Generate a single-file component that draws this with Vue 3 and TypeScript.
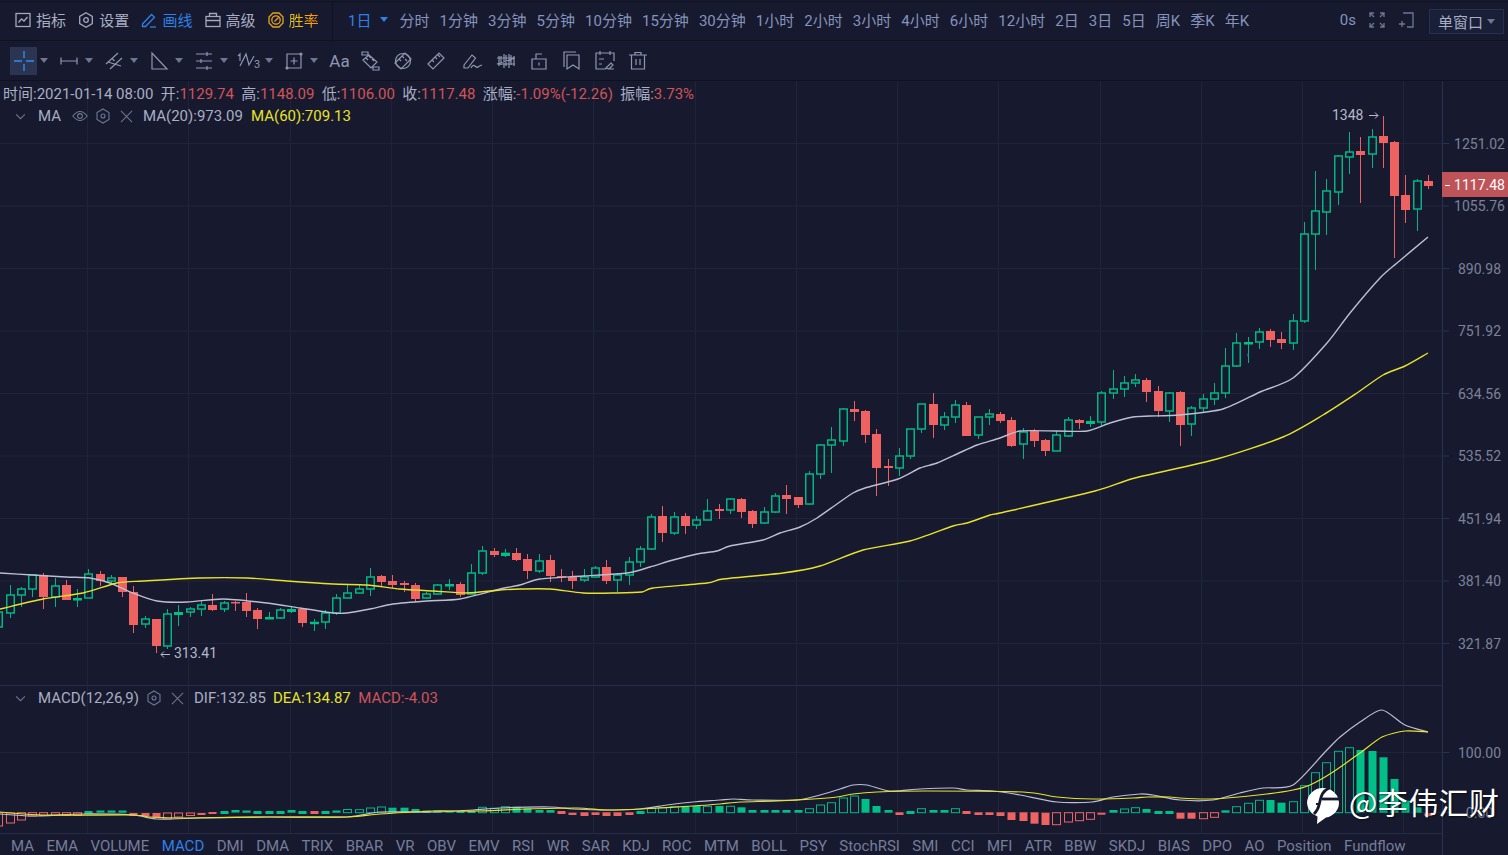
<script setup lang="ts">
type Candle = [string, number, number, number, number]
const raw: Candle[] = [
['g',612,627,608,631],['g',595,613,585,618],['g',589,595,587,607],['g',575,589,575,597],['r',575,597,573,609],['g',586,597,578,607],['r',585,600,580,600],['g',598,599,589,607],
['g',574,598,569,598],['r',574,581,571,586],['g',578,581,575,583],['r',577,592,577,597],['r',592,625,586,633],['g',619,624,616,628],['r',619,646,619,653],['g',614,646,609,649],
['g',612,614,605,626],['g',609,612,607,617],['g',605,609,601,616],['r',605,610,594,611],['g',603,609,601,612],['r',602,603,601,611],['r',602,611,593,617],['r',610,619,608,629],
['g',617,618,612,619],['g',610,618,608,619],['g',609,611,607,613],['r',609,623,608,627],['g',621.7,623,619,631],['g',613,622,610,629],['g',598,613,594,615],['g',593,598,585,598],
['g',589,593,585,593],['g',577,589,568,596],['r',576,582,575,587],['r',581,585,575,588],['r',583,585,581,592],['r',585,599,583,602],['g',594,598,592,599],['g',585,594,584,595],
['g',584,585,579,590],['r',584,595,582,597],['g',573,594,564,594],['g',551,573,546,575],['r',551,555,548,557],['g',552.7,555,549,557],['r',553,560,548,561],['r',559,571,554,579],
['g',561,571,554,573],['r',560,576,555,582],['r',576,577,569,582],['r',577,581,571,589],['g',577,580,569,582],['g',568,577,566,578],['r',567,581,560,584],['g',575,580,573,592],
['g',562,575,557,585],['g',549,562,546,567],['g',517,549,514,550],['r',516,533,506,542],['g',517,533,512,535],['r',516,526,513,534],['g',520,525,516,529],['g',511,520,499,520],
['r',509,511,504,519],['g',499,510,498,514],['r',499,512,498,518],['r',511,524,510,528],['g',512,523,507,524],['g',496,512,493,513],['r',495,499,485,514],['r',497,505,497,508],
['g',474,504,471,505],['g',445,474,444,479],['g',440,445,427,473],['g',409,441,408,446],['r',409,412,401,421],['r',411,435,410,443],['r',434,468,429,496],['r',466,468,459,486],
['g',456,468,448,476],['g',429,456,429,459],['g',404,429,404,433],['r',404,425,393,438],['g',417,425,412,430],['g',405,417,400,423],['r',405,436,402,436],['g',417,435,417,439],
['g',414,417,409,425],['r',414,421,412,423],['r',420,446,417,447],['g',432,444,428,459],['r',431,441,429,447],['r',440,451,439,456],['g',435,451,431,451],['g',420,436,417,437],
['r',420,423,419,429],['g',421,423,416,427],['g',393,422,391,426],['g',389,393,370,399],['g',383,389,376,397],['g',380,383,374,387],['r',380,392,378,402],['r',391,411,386,417],
['g',393,411,392,422],['r',392,425,391,446],['g',408,424,406,436],['g',399,408,394,412],['g',393,399,383,405],['g',366,393,348,398],['g',343,366,333,367],['g',342,343,337,363],
['g',332,342,328,349],['r',331,340,329,347],['r',339,343,332,349],['g',321,343,314,350],['g',234,321,222,323],['g',211,234,171,270],['g',191,212,179,235],['g',156,192,155,205],
['g',152,157,132,174],['r',151,155,137,203],['g',137,154,129,168],['r',136,143,116,168],['r',142,196,141,258],['r',195,210,175,223],['g',181,209,179,231],['r',181,186,175,189],
]
const xOf = (i: number) => Math.round(-1.6 + 11.255 * i) + 0.5
const candles = raw.map((c, i) => {
  const [t, top, bot, hi, lo] = c
  const x = xOf(i)
  const thin = bot - top < 3
  return { key: i, green: t === 'g', x, top, bot, hi, lo, thin, h: Math.max(bot - top, 1.5) }
})

// Catmull-Rom smoothing of the sampled curves, so that they bend like the reference's lines
const smooth = (a: number[][]) => {
  let d = `M${a[0][0]} ${a[0][1]}`
  for (let i = 0; i < a.length - 1; i++) {
    const p0 = a[Math.max(i - 1, 0)]
    const p1 = a[i]
    const p2 = a[i + 1]
    const p3 = a[Math.min(i + 2, a.length - 1)]
    const c1x = p1[0] + (p2[0] - p0[0]) / 8
    const c1y = p1[1] + (p2[1] - p0[1]) / 8
    const c2x = p2[0] - (p3[0] - p1[0]) / 8
    const c2y = p2[1] - (p3[1] - p1[1]) / 8
    d += `C${c1x.toFixed(1)} ${c1y.toFixed(1)} ${c2x.toFixed(1)} ${c2y.toFixed(1)} ${p2[0]} ${p2[1]}`
  }
  return d
}
const ma20 = smooth([[0,573],[33,575],[66,577],[90,578],[110,583],[133,593],[157,601],[187,602],[223,599],[267,603],[300,608],[333,613],[347,613],[370,609],[393,604],[427,601],[460,599],[500,589],[520,585],[540,579],[583,576],[627,573],[650,567],[673,560],[697,554],[717,551],[730,546],[763,540],[780,533],[800,527],[817,518],[837,504],[853,493],[865,488],[898,479],[920,468],[937,463],[957,454],[977,445],[1000,438],[1020,431],[1057,431],[1087,431],[1110,423],[1133,417],[1150,416],[1180,415],[1223,409],[1260,392],[1293,378],[1327,343],[1350,313],[1380,278],[1397,263],[1428,237]])
const ma60 = smooth([[0,609],[43,599],[83,593],[117,583],[143,581],[200,578],[247,578],[287,581],[333,584],[367,585],[400,589],[433,591],[467,593],[500,590],[520,589],[550,589],[583,593],[617,593],[642,592],[653,588],[707,583],[723,579],[783,573],[820,566],[863,550],[910,541],[953,526],[967,523],[990,515],[1000,513],[1095,491],[1135,478],[1217,459],[1283,437],[1323,415],[1357,393],[1383,375],[1405,366],[1428,353]])
const dif = smooth([[0,814],[33,816],[83,814],[133,815],[157,819],[200,818],[267,817],[347,817],[380,812],[433,812],[473,810],[500,808],[550,807],[573,809],[607,810],[640,809],[667,805],[693,802],[720,800],[733,799],[753,800],[797,800],[820,795],[840,789],[853,785],[867,785],[890,791],[920,789],[953,788],[967,790],[993,791],[1020,795],[1057,802],[1092,802],[1113,797],[1140,794],[1153,795],[1180,800],[1213,800],[1240,793],[1263,788],[1293,785],[1325,752],[1340,737],[1360,722],[1382,710],[1405,725],[1428,732]])
const dea = smooth([[0,812],[43,815],[133,815],[150,817],[187,818],[267,817],[347,817],[380,814],[433,811],[477,811],[527,809],[577,808],[607,810],[640,809],[693,806],[720,804],[740,802],[777,801],[813,799],[837,797],[853,794],[877,792],[927,791],[1023,792],[1057,797],[1093,799],[1133,798],[1147,797],[1170,797],[1180,798],[1207,799],[1227,798],[1267,794],[1293,790],[1310,785],[1333,772],[1360,753],[1382,737],[1405,731],[1428,732]])

type Bar = [string, number, number]
const B = 812.7
const hist: Bar[] = [
['r',B,826],['r',813,823],['r',B,820],['r',B,816],['r',B,815.5],['r',B,815.5],['r',B,815.5],['r',B,815.5],
['G',811,814],['G',810.5,B],['G',810.5,B],['G',810.5,B],['R',813,816],['R',813,816],['R',813,818],['r',813,819],
['r',813,817],['r',813,815.5],['R',813,815],['R',812,814],['G',811,814],['G',810,812.5],['G',810.5,B],['G',811,814],
['G',811,814],['G',811,814],['G',810,B],['G',811,814],['R',811,814],['G',811,814],['G',810.5,B],['g',809.5,B],
['g',809.7,B],['g',808,B],['g',807,B],['G',807.7,B],['G',807.7,B],['G',809,B],['G',810.5,B],['G',810.5,B],
['G',811,B],['G',811,813],['G',811,813],['g',807.3,B],['g',808.3,B],['g',806.7,B],['G',806.7,B],['G',808.3,B],
['G',810,B],['G',810,B],['R',811,814],['R',B,815],['R',812.3,816],['R',812.3,815],['R',812.3,816],['R',812.3,816],
['R',812.3,815],['G',811,814],['g',808.3,B],['g',807.7,B],['g',806.7,B],['G',807,B],['G',806,B],['g',806.3,B],
['G',806,B],['g',806.3,B],['G',807.3,B],['G',810,B],['G',810,B],['G',810,B],['G',810,B],['G',810,B],
['g',808.7,B],['g',805,B],['g',802.7,B],['g',798,B],['g',796,B],['G',799,B],['G',806,B],['G',810,B],
['R',812.3,815],['G',811,814],['g',808.7,B],['G',810,B],['G',810,B],['g',808.7,B],['R',811,814],['R',812.3,815],
['R',812.3,815],['R',812.3,816],['R',812.3,820],['R',812.3,821],['R',812.3,823.7],['R',B,825],['r',B,824.7],['r',B,822],
['r',B,820.7],['r',B,819.3],['R',B,814.7],['G',810,B],['g',809,B],['g',807.7,B],['G',809,B],['G',811,814],
['G',811,814],['R',B,818.7],['R',B,818.7],['r',B,818.7],['r',B,817.3],['G',810.3,B],['g',806.7,B],['g',803.3,B],
['g',800.3,B],['G',800,B],['G',802.7,B],['g',801.7,B],['g',785.7,B],['g',772.7,B],['g',762.7,B],['g',751.3,B],
['g',747.7,B],['G',750,B],['G',751,B],['G',757.3,B],['G',779,B],['G',800.7,B],['G',807.3,B],['R',813.3,816],
]
const bars = hist.map((b, i) => ({
  key: i,
  x: xOf(i),
  cls: { g: 'bar-g-h', G: 'bar-g', r: 'bar-r-h', R: 'bar-r' }[b[0]] as string,
  y: b[1],
  h: b[2] - b[1],
}))

const vGrid = Array.from({ length: 14 }, (_, i) => 87.5 + Math.round(101.25 * i))
const hLabels = [
  { y: 143.5, t: '1251.02' }, { y: 206, t: '1055.76' }, { y: 268.5, t: '890.98' }, { y: 331, t: '751.92' },
  { y: 393.5, t: '634.56' }, { y: 456, t: '535.52' }, { y: 518.5, t: '451.94' }, { y: 581, t: '381.40' }, { y: 643.5, t: '321.87' },
  { y: 752.5, t: '100.00' }, { y: 812.5, t: '0.00' },
]
const periods = ['分时','1分钟','3分钟','5分钟','10分钟','15分钟','30分钟','1小时','2小时','3小时','4小时','6小时','12小时','2日','3日','5日','周K','季K','年K']
const tabs = ['MA','EMA','VOLUME','MACD','DMI','DMA','TRIX','BRAR','VR','OBV','EMV','RSI','WR','SAR','KDJ','ROC','MTM','BOLL','PSY','StochRSI','SMI','CCI','MFI','ATR','BBW','SKDJ','BIAS','DPO','AO','Position','Fundflow']
</script>

<template>
  <div class="app">
    <header class="topbar">
      <div class="menu">
        <span class="menu-item">
          <svg class="ic16" viewBox="0 0 16 16"><rect x="1" y="1.5" width="14" height="13" /><path d="M3.5 10.5 6.5 7l2.5 2 3.5-4" /></svg>指标
        </span>
        <span class="menu-item">
          <svg class="ic16" viewBox="0 0 16 16"><path d="M8 .8 14.3 4.4v7.2L8 15.2 1.7 11.6V4.4Z" /><circle cx="8" cy="8" r="2.3" /></svg>设置
        </span>
        <span class="menu-item active">
          <svg class="ic16 blue" viewBox="0 0 16 16"><path d="M1.5 12 10.5 2.5l3 2.8-9 9.2H1.5Z" /><path d="M9 15h6" /></svg>画线
        </span>
        <span class="menu-item">
          <svg class="ic16" viewBox="0 0 16 16"><rect x="1" y="4.5" width="14" height="10" /><path d="M1 8.5h14M4.5 4.5V1.5h7v3" /></svg>高级
        </span>
        <span class="menu-item">
          <svg class="ic16 orange" viewBox="0 0 16 16"><path d="M5 1h6l4 4v6l-4 4H5l-4-4V5Z" /><circle cx="8" cy="8" r="4.200" /><path d="M6.5 9.5 10.5 5.5" /></svg><em class="rate">胜率</em>
        </span>
      </div>
      <div class="periods">
        <span class="cur-period">1日<i class="caret blue-caret"></i></span>
        <span v-for="p in periods" :key="p" class="period">{{ p }}</span>
      </div>
      <div class="top-right">
        <span class="secs">0s</span>
        <svg class="ic16 dim" viewBox="0 0 16 16"><path d="M1 5V1h4M11 1h4v4M15 11v4h-4M5 15H1v-4M1.5 1.5 5 5M14.5 1.5 11 5M14.5 14.5 11 11M1.5 14.5 5 11" /></svg>
        <svg class="ic16 dim" viewBox="0 0 16 16"><path d="M5 1h10v14H9M1 12h6M4 9v6" /></svg>
        <div class="win-select">单窗口<i class="caret gray-caret"></i></div>
      </div>
    </header>

    <nav class="toolbar">
      <div class="tool-group">
        <span class="tool on">
          <svg class="ic20" viewBox="0 0 20 20"><path class="cross" d="M0 10H8M12 10H20M10 0V7M10 13V20" /></svg>
        </span><i class="caret gray-caret"></i>
      </div>
      <div class="tool-group">
        <span class="tool"><svg class="ic20" viewBox="0 0 20 20"><path d="M2 6.5v7M18 6.5v7M2 10h16" /></svg></span><i class="caret gray-caret"></i>
      </div>
      <div class="tool-group">
        <span class="tool"><svg class="ic20" viewBox="0 0 20 20"><path d="M2 13 14 2M6 18 18 7M4 11 17 15M8 7.5l2.5 2.5" /></svg></span><i class="caret gray-caret"></i>
      </div>
      <div class="tool-group">
        <span class="tool"><svg class="ic20" viewBox="0 0 20 20"><path d="M3 2V18H18Z" /></svg></span><i class="caret gray-caret"></i>
      </div>
      <div class="tool-group">
        <span class="tool"><svg class="ic20" viewBox="0 0 20 20"><path d="M2 3H18M2 10H18M2 17H18M13 1V5M7 8V12M13 15V19" /></svg></span><i class="caret gray-caret"></i>
      </div>
      <div class="tool-group">
        <span class="tool wave">
          <svg class="ic24" viewBox="0 0 24 20"><path d="M1 5l2-2V10M3 15 9 3 12 14 17 5" /><text x="17" y="17" class="ic-text">3</text></svg>
        </span><i class="caret gray-caret"></i>
      </div>
      <div class="tool-group">
        <span class="tool"><svg class="ic20" viewBox="0 0 20 20"><path d="M3 3H17V17H3ZM10 6.5v7M6.5 10h7" /><circle class="dot" cx="17" cy="3" r="1.6" /><circle class="dot" cx="3" cy="17" r="1.6" /></svg></span><i class="caret gray-caret"></i>
      </div>
      <span class="aa">Aa</span>
      <div class="singles">
        <svg class="ic20" viewBox="0 0 20 20"><path d="M2 1H8V4H2ZM13 16H19V19H13ZM3 9 9 4 17 11 11 17ZM6 7l2 2M9 5l2 2M12 8l2 2" /></svg>
        <svg class="ic20" viewBox="0 0 20 20"><circle cx="10" cy="10" r="7.500" /><path d="M2 12 12 2 18 8 8 18ZM6 8l2 2M9 5l2 2M12 8l2 2" /></svg>
        <svg class="ic20" viewBox="0 0 20 20"><path d="M2 13 13 2 18 7 7 18ZM6 9l2 2M9 6l2 2M12 4l2 2" /></svg>
        <svg class="ic20 pen" viewBox="0 0 20 20"><path d="M1 14 9 4l3.500 3L5 17H1ZM8 17q2-4 4-2t3 1 4-2" /></svg>
        <svg class="ic20" viewBox="0 0 20 20"><path d="M1 7H19M1 13H19M3 5v10M8 3v14M13 3v14M18 5v10M1 13 19 7M5 5v9M10 4v11M15 4v10" /></svg>
        <svg class="ic20" viewBox="0 0 20 20"><path d="M3 8H17V18H3ZM7 8V3H13M10 11.500v3" /></svg>
        <svg class="ic20" viewBox="0 0 20 20"><path d="M2 16V1H14M5 4H17V18L11 14 5 18Z" /></svg>
        <svg class="ic20" viewBox="0 0 20 20"><path d="M11 18H1V2H19V10M5 0V4M15 0V4M4 8H9M4 13H7M11 17 16 12l2 2-4 4ZM15 18h4" /></svg>
        <svg class="ic20" viewBox="0 0 20 20"><path d="M1 4H19M7 4V1.500H13V4M3.500 4V18H16.500V4M8 8V14M12 8V14" /></svg>
      </div>
    </nav>

    <section class="chart">
      <svg class="plot" viewBox="0 81 1508 752" width="1508" height="752">
        <g class="grid">
          <line v-for="x in vGrid" :key="x" :x1="x" :x2="x" y1="81" y2="833" />
          <line v-for="l in hLabels" :key="l.t" x1="0" x2="1442" :y1="l.y" :y2="l.y" />
        </g>
        <line class="sep" x1="0" x2="1442" y1="685.5" y2="685.5" />

        <g v-for="c in candles" :key="c.key">
          <template v-if="c.green">
            <line class="wick-g" :x1="c.x" :x2="c.x" :y1="c.hi" :y2="c.top" />
            <line class="wick-g" :x1="c.x" :x2="c.x" :y1="c.bot" :y2="c.lo" />
            <rect v-if="c.thin" class="solid-g" :x="c.x - 4.5" :y="c.top" width="9" :height="c.h + 1" />
            <rect v-else class="hollow-g" :x="c.x - 3.75" :y="c.top" width="7.5" :height="c.h" />
          </template>
          <template v-else>
            <line class="wick-r" :x1="c.x" :x2="c.x" :y1="c.hi" :y2="c.lo" />
            <rect class="solid-r" :x="c.x - 4.5" :y="c.top" width="9" :height="c.h" />
          </template>
        </g>
        <line class="blue-tick" x1="1248" x2="1248" y1="353.500" y2="356.500" />
        <path class="line-white" :d="ma20" />
        <path class="line-yellow" :d="ma60" />

        <text class="note" x="1332" y="120">1348</text>
        <path class="note-arrow" d="M1369 115.500H1378M1375 112.500l3 3-3 3" />
        <text class="note" x="174" y="658">313.41</text>
        <path class="note-arrow" d="M161 654.500H170M164 651.500l-3 3 3 3" />

        <rect v-for="b in bars" :key="b.key" :class="b.cls" :x="b.x - 4" :y="b.y" width="8" :height="b.h" />
        <path class="line-white thin" :d="dif" />
        <path class="line-yellow thin" :d="dea" />

        <line class="axis" x1="1442.5" x2="1442.5" y1="81" y2="833" />
        <g v-for="l in hLabels" :key="'a' + l.t">
          <line class="axis" x1="1443" x2="1449" :y1="l.y" :y2="l.y" />
          <text class="axis-text" x="1479.500" :y="l.y + 5">{{ l.t }}</text>
        </g>
        <rect class="price-tag" x="1442" y="172" width="66" height="25" />
        <line class="price-dash" x1="1445" x2="1450" y1="185.500" y2="185.500" />
        <text class="price-text" x="1479.500" y="190">1117.48</text>
      </svg>

      <div class="legend main-legend">
        <div class="info">
          <span><b>时间:</b>2021-01-14 08:00</span>
          <span><b>开:</b><u>1129.74</u></span>
          <span><b>高:</b><u>1148.09</u></span>
          <span><b>低:</b><u>1106.00</u></span>
          <span><b>收:</b><u>1117.48</u></span>
          <span><b>涨幅:</b><u>-1.09%(-12.26)</u></span>
          <span><b>振幅:</b><u>3.73%</u></span>
        </div>
        <div class="ind">
          <svg class="chev" viewBox="0 0 12 8"><path d="M1 1.500 6 6.500 11 1.500" /></svg>
          <span class="ind-name ma-name">MA</span>
          <svg class="lg eye" viewBox="0 0 16 12"><path d="M.8 6Q8-3 15.200 6 8 15 .8 6Z" /><circle cx="8" cy="6" r="2.400" /></svg>
          <svg class="lg hex" viewBox="0 0 14 16"><path d="M7 1 13 4.500V11.500L7 15 1 11.500V4.500Z" /><circle cx="7" cy="8" r="2" /></svg>
          <svg class="lg x" viewBox="0 0 14 14"><path d="M1 1 13 13M13 1 1 13" /></svg>
          <span class="v1">MA(20):973.09</span>
          <span class="v2">MA(60):709.13</span>
        </div>
      </div>

      <div class="legend macd-legend">
        <div class="ind">
          <svg class="chev" viewBox="0 0 12 8"><path d="M1 1.500 6 6.500 11 1.500" /></svg>
          <span class="ind-name">MACD(12,26,9)</span>
          <svg class="lg hex macd-hex" viewBox="0 0 14 16"><path d="M7 1 13 4.500V11.500L7 15 1 11.500V4.500Z" /><circle cx="7" cy="8" r="2" /></svg>
          <svg class="lg x" viewBox="0 0 14 14"><path d="M1 1 13 13M13 1 1 13" /></svg>
          <span class="v1 dif">DIF:132.85</span>
          <span class="v2 dea">DEA:134.87</span>
          <span class="v3">MACD:-4.03</span>
        </div>
      </div>

      <div class="watermark">
        <svg class="wm-logo" viewBox="0 0 34 38">
          <path class="wm-white" d="M17 1A16 15 0 0 1 33 16 16 15 0 0 1 20 30.500L11 37 11.500 29.500A16 15 0 0 1 1 16 16 15 0 0 1 17 1Z" />
          <path class="wm-cut" d="M24 .5C14 5 15 12 13 18 12 23 10 25 8 27" />
          <path class="wm-cut" d="M16 12H34" />
          <path class="wm-cut thin-cut" d="M10 17H14" />
        </svg>
        <span class="wm-text">@李伟汇财</span>
      </div>
    </section>

    <footer class="tabs">
      <span v-for="t in tabs" :key="t" :class="{ 'tab-on': t === 'MACD' }">{{ t }}</span>
    </footer>
  </div>
</template>

<style scoped>
.app {
  width: 1508px;
  height: 855px;
  padding-top: 1px;
  box-sizing: border-box;
  background: #171a2e;
  overflow: hidden;
  font-family: Roboto, "Noto Sans CJK SC", sans-serif;
  font-size: 15px;
  color: #a9aec4;
}
.topbar {
  height: 40px;
  box-sizing: border-box;
  border-top: 1px solid #0e1120;
  border-bottom: 1px solid #0e1120;
  padding-bottom: 3px;
  display: flex;
  align-items: center;
  white-space: nowrap;
}
.menu {
  width: 333px;
  height: 41px;
  margin-bottom: -3px;
  box-sizing: border-box;
  border-right: 1px solid #0e1120;
  padding: 0 0 3px 15px;
  display: flex;
  align-items: center;
  gap: 12.200px;
  flex: none;
}
.menu-item {
  display: flex;
  align-items: center;
  gap: 5px;
  color: #a9aec4;
}
.menu-item.active { color: #2f80e8; }
.rate {
  font-style: normal;
  background: linear-gradient(90deg, #c8c030 0%, #ffb400 45%, #ff8f00 100%);
  -webkit-background-clip: text;
  background-clip: text;
  color: transparent;
}
.ic16 { width: 16px; height: 16px; fill: none; stroke: #a3a8c0; stroke-width: 1.300; flex: none; }
.ic16.blue { stroke: #2f80e8; }
.ic16.orange { stroke: #e5a21e; }
.ic16.dim { stroke: #6f7693; }
.periods {
  display: flex;
  align-items: center;
  padding-left: 15px;
  flex: none;
}
.cur-period {
  color: #2f80e8;
  display: flex;
  align-items: center;
  gap: 9px;
  margin-right: 6px;
}
.period {
  color: #8593bd;
  padding: 0 5.040px;
}
.caret {
  display: block;
  width: 0;
  height: 0;
  border-left: 4px solid transparent;
  border-right: 4px solid transparent;
  border-top: 5px solid #6f7693;
  flex: none;
}
.blue-caret { border-top-color: #2f80e8; }
.top-right {
  margin-left: auto;
  display: flex;
  align-items: center;
  gap: 13px;
  padding-right: 4px;
}
.secs { color: #8593bd; }
.win-select {
  width: 75px;
  height: 25px;
  box-sizing: border-box;
  border: 1px solid #29304f;
  background: #1a1f38;
  display: flex;
  align-items: center;
  justify-content: space-between;
  padding: 0 8px;
  color: #a9aec4;
  margin: 3px 0 0 2px;
}
.toolbar {
  height: 40px;
  box-sizing: border-box;
  border-bottom: 1px solid #0e1120;
  display: flex;
  align-items: center;
  padding-left: 10px;
}
.tool-group {
  width: 45px;
  display: flex;
  align-items: center;
  flex: none;
}
.tool {
  width: 27px;
  height: 28px;
  display: flex;
  align-items: center;
  justify-content: center;
  margin-right: 3px;
  flex: none;
}
.tool.on { background: #2b3450; }
.ic20 { width: 20px; height: 20px; fill: none; stroke: #9096b2; stroke-width: 1.200; flex: none; }
.ic24 { width: 24px; height: 20px; fill: none; stroke: #9096b2; stroke-width: 1.200; flex: none; }
.ic-text { font-size: 11px; fill: #9096b2; stroke: none; }
.cross { stroke: #2f8df0; stroke-width: 1.400; }
.dot { fill: #9096b2; stroke: none; }
.aa {
  width: 29px;
  text-align: center;
  font-size: 17px;
  color: #9096b2;
  flex: none;
}
.singles {
  display: flex;
  align-items: center;
  gap: 13px;
  padding-left: 6px;
}
.pen { margin-left: 4px; }
.chart {
  position: relative;
  height: 752px;
}
.plot { display: block; }
.grid line { stroke: #1f2438; stroke-width: 1; }
.sep { stroke: #272c46; stroke-width: 1; }
.wick-g { stroke: #00b585; stroke-width: 1; }
.wick-r { stroke: #ee6060; stroke-width: 1; }
.solid-g { fill: #00c087; }
.hollow-g { fill: none; stroke: #00b585; stroke-width: 1.500; }
.solid-r { fill: #ef6262; }
.blue-tick { stroke: #1f86e8; stroke-width: 1; }
.line-white, .line-yellow { fill: none; stroke-width: 1.400; stroke-linejoin: round; }
.line-white { stroke: #bcbfd4; }
.line-yellow { stroke: #e8e22a; }
.thin { stroke-width: 1.200; }
.note { font-size: 14px; fill: #b5b9cc; }
.note-arrow { fill: none; stroke: #b5b9cc; stroke-width: 1; }
.bar-g { fill: #00c087; }
.bar-r { fill: #ef6262; }
.bar-g-h { fill: none; stroke: #00b585; stroke-width: 1; }
.bar-r-h { fill: none; stroke: #ef6262; stroke-width: 1; }
.axis { stroke: #2a3150; stroke-width: 1; }
.axis-text { font-size: 14px; fill: #7d8299; text-anchor: middle; }
.price-tag { fill: #bf5458; }
.price-dash { stroke: #fff; stroke-width: 1; }
.price-text { font-size: 14px; fill: #fff; text-anchor: middle; }
.legend {
  position: absolute;
  left: 0;
  white-space: nowrap;
}
.main-legend { top: 3px; }
.macd-legend { top: 607px; }
.info {
  height: 20px;
  line-height: 20px;
  padding-left: 3px;
  display: flex;
  gap: 7.300px;
}
.info b { font-weight: 400; }
.info u { text-decoration: none; color: #d05458; }
.ind {
  margin-top: 2px;
  height: 20px;
  line-height: 20px;
  padding-left: 15px;
  display: flex;
  align-items: center;
}
.macd-legend .ind { margin-top: 0; }
.chev { width: 11px; height: 7px; fill: none; stroke: #6f7693; stroke-width: 1.200; margin-right: 12px; flex: none; }
.ind-name { color: #a9aec4; }
.lg { fill: none; stroke: #6f7693; stroke-width: 1.100; flex: none; }
.eye { width: 16px; height: 12px; margin-left: 11px; }
.hex { width: 14px; height: 16px; margin-left: 8px; }
.macd-hex { margin-left: 8px; }
.x { width: 13px; height: 13px; margin-left: 10px; }
.v1 { margin-left: 10px; color: #a9aec4; }
.v2 { margin-left: 8px; color: #e8e22a; }
.dea { margin-left: 7px; }
.v3 { margin-left: 7.500px; color: #d05458; }
.watermark {
  position: absolute;
  left: 1306px;
  top: 706px;
  display: flex;
  align-items: flex-start;
  gap: 9px;
  color: #fff;
  font-size: 30px;
  font-family: "Noto Sans CJK SC", sans-serif;
  line-height: 38px;
  text-shadow: 1px 1px 2px rgba(0, 0, 0, .55);
}
.wm-text { margin-top: -5px; letter-spacing: .4px; }
.wm-logo { width: 34px; height: 38px; flex: none; }
.wm-white { fill: #fff; }
.wm-cut { fill: none; stroke: #171a2e; stroke-width: 2.800; }
.thin-cut { stroke-width: 2; }
.tabs {
  width: 1443px;
  height: 22px;
  box-sizing: border-box;
  border-top: 1px solid #272c46;
  border-right: 1px solid #2a3150;
  padding: 2px 0 0 11px;
  display: flex;
  align-items: center;
  gap: 12.450px;
  color: #767d9b;
  white-space: nowrap;
}
.tab-on { color: #2f80e8; }
</style>

<style>
html, body { margin: 0; background: #171a2e; }
</style>
